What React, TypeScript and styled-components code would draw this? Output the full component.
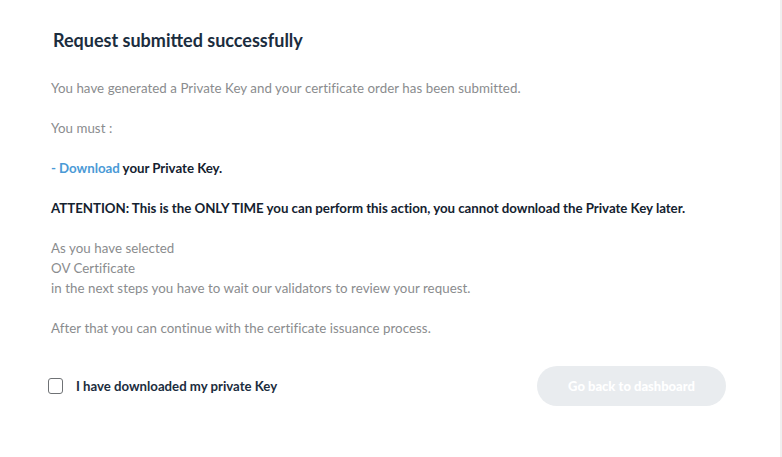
import styled, { createGlobalStyle } from 'styled-components'

const GlobalStyle = createGlobalStyle`
  html, body {
    margin: 0;
    padding: 0;
    background: #f0f0f0;
  }
  body {
    font-family: Lato, 'Noto Sans', sans-serif;
  }
`

const Card = styled.div`
  width: 780px;
  height: 457px;
  background: #ffffff;
  box-sizing: border-box;
  padding: 29px 54px 0 51px;
`

const Title = styled.h2`
  margin: 0 0 0 2px;
  font-size: 18px;
  line-height: 22px;
  font-weight: 700;
  color: #1b2d3e;
`

const Body = styled.div`
  margin-top: 27px;
  display: flex;
  flex-direction: column;
  gap: 20px;
`

const Paragraph = styled.p<{ $strong?: boolean }>`
  margin: 0;
  font-size: 13.3px;
  line-height: 20px;
  font-weight: ${({ $strong }) => ($strong ? 700 : 400)};
  letter-spacing: ${({ $strong }) => ($strong ? '-0.04px' : '0.05px')};
  color: ${({ $strong }) => ($strong ? '#14222f' : '#8a8c8e')};
`

const Link = styled.a`
  color: #4a9ad6;
  text-decoration: none;
  cursor: pointer;
`

const Footer = styled.div`
  margin-top: 28px;
  display: flex;
  align-items: center;
  justify-content: space-between;
`

const CheckLabel = styled.label`
  display: flex;
  align-items: center;
  gap: 13px;
  margin-left: -3px;
  font-size: 13.2px;
  font-weight: 700;
  color: #1b2d3e;
  cursor: pointer;
`

const Box = styled.span`
  width: 13px;
  height: 14px;
  border: 1.5px solid #6f7275;
  border-radius: 3px;
  background: #fff;
`

const Button = styled.button`
  width: 189px;
  height: 40px;
  border: none;
  border-radius: 20px;
  background: #e9ecef;
  color: #ffffff;
  font-family: Lato, 'Noto Sans', sans-serif;
  font-size: 13px;
  font-weight: 900;
  cursor: not-allowed;
`

export default function App() {
  return (
    <>
      <GlobalStyle />
      <Card>
        <Title>Request submitted successfully</Title>
        <Body>
          <Paragraph>You have generated a Private Key and your certificate order has been submitted.</Paragraph>
          <Paragraph>You must :</Paragraph>
          <Paragraph $strong>
            <Link>- Download</Link> your Private Key.
          </Paragraph>
          <Paragraph $strong>
            ATTENTION: This is the ONLY TIME you can perform this action, you cannot download the Private Key later.
          </Paragraph>
          <Paragraph>
            As you have selected
            <br />
            OV Certificate
            <br />
            in the next steps you have to wait our validators to review your request.
          </Paragraph>
          <Paragraph>After that you can continue with the certificate issuance process.</Paragraph>
        </Body>
        <Footer>
          <CheckLabel>
            <Box />
            I have downloaded my private Key
          </CheckLabel>
          <Button disabled>Go back to dashboard</Button>
        </Footer>
      </Card>
    </>
  )
}
